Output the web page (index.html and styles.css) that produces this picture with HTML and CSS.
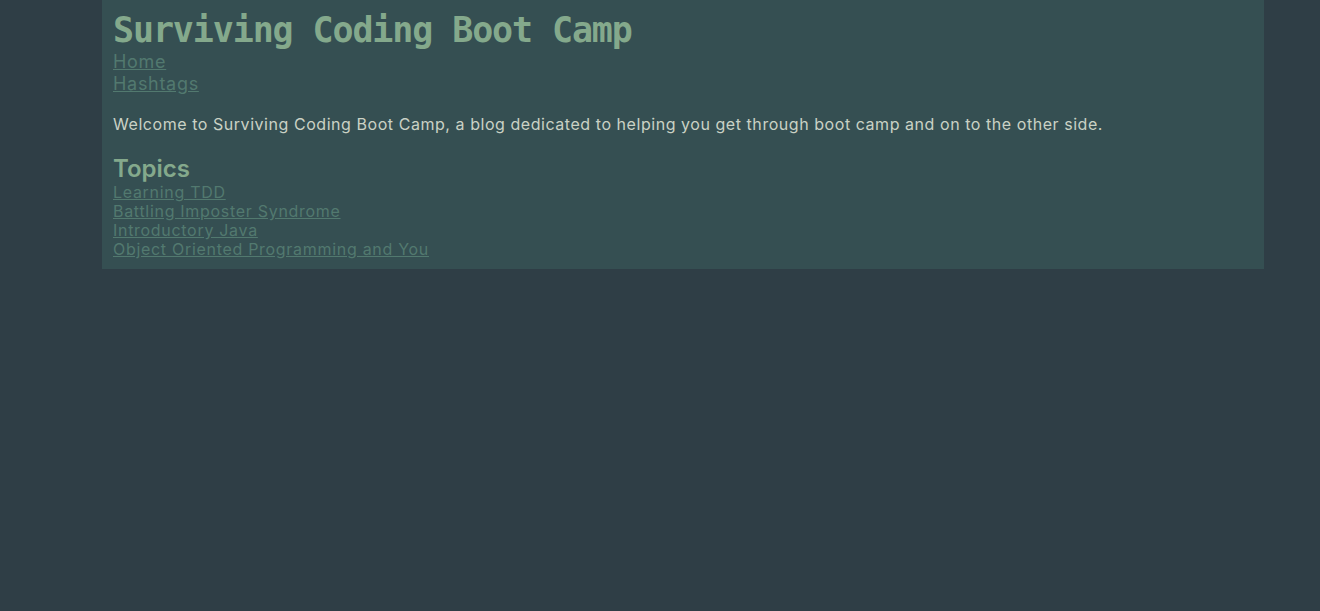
FILE: index.html
```html
<!DOCTYPE html>
<html lang="en">
<head>
<meta charset="utf-8">
<title>Surviving Coding Boot Camp</title>
<link rel="stylesheet" href="styles.css">
</head>
<body>
<main class="page">
  <header class="masthead">
    <h1 class="site-title">Surviving Coding Boot Camp</h1>
    <nav class="site-nav">
      <a href="#" class="nav-link">Home</a>
      <a href="#" class="nav-link">Hashtags</a>
    </nav>
  </header>
  <p class="intro">Welcome to Surviving Coding Boot Camp, a blog dedicated to helping you get through boot camp and on to the other side.</p>
  <section class="topics">
    <h2 class="topics-title">Topics</h2>
    <ul class="topic-list">
      <li class="topic-item"><a href="#" class="topic-link">Learning TDD</a></li>
      <li class="topic-item"><a href="#" class="topic-link">Battling Imposter Syndrome</a></li>
      <li class="topic-item"><a href="#" class="topic-link">Introductory Java</a></li>
      <li class="topic-item"><a href="#" class="topic-link">Object Oriented Programming and You</a></li>
    </ul>
  </section>
</main>
</body>
</html>
```

FILE: styles.css
```css
html, body {
  margin: 0;
  padding: 0;
}
body {
  background: #2F3E46;
  font-family: Inter, "Open Sans", sans-serif;
  color: #CAD2C5;
  min-height: 611px;
}
.page {
  box-sizing: border-box;
  width: 1162px;
  margin-left: 102px;
  background: #354F52;
  padding: 10px 11px 10px 11px;
}
.site-title {
  margin: 0;
  font-family: "DejaVu Sans Mono", "Liberation Mono", monospace;
  font-weight: bold;
  font-size: 35px;
  letter-spacing: -1.12px;
  line-height: 41px;
  color: #84A98C;
}
.site-nav {
  display: flex;
  flex-direction: column;
  align-items: flex-start;
}
.nav-link {
  font-size: 18px;
  line-height: 22px;
  letter-spacing: 0.7px;
  color: #52796F;
}
.intro {
  margin: 19px 0 0;
  font-size: 16px;
  line-height: 20px;
  letter-spacing: 0.55px;
}
.topics-title {
  margin: 21px 0 0;
  font-size: 24px;
  font-weight: 600;
  line-height: 28px;
  color: #84A98C;
}
.topic-list {
  list-style: none;
  margin: 0;
  padding: 0;
}
.topic-item {
  font-size: 16px;
  line-height: 19px;
}
.topic-link {
  letter-spacing: 0.7px;
  color: #52796F;
}
```
